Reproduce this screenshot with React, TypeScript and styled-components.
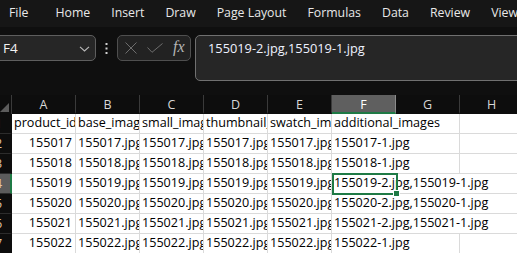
import styled, { createGlobalStyle } from 'styled-components';

const GlobalStyle = createGlobalStyle`
  html, body {
    margin: 0;
    padding: 0;
    background: #0f0f0f;
    overflow: hidden;
  }
  body {
    width: 517px;
    height: 253px;
    font-family: "Open Sans", "Liberation Sans", sans-serif;
  }
`;

const tabs = ['File', 'Home', 'Insert', 'Draw', 'Page Layout', 'Formulas', 'Data', 'Review', 'View'];
const columns = ['A', 'B', 'C', 'D', 'E', 'F', 'G', 'H'];

// a cell is its text and how many columns its text runs over
type CellData = { text: string; span?: number };

const imgs = (id: string, extra: CellData[]): CellData[] => [
  { text: id },
  { text: `${id}.jpg` },
  { text: `${id}.jpg` },
  { text: `${id}.jpg` },
  { text: `${id}.jpg` },
  ...extra,
];

const rows: CellData[][] = [
  [
    { text: 'product_id' },
    { text: 'base_image' },
    { text: 'small_image' },
    { text: 'thumbnail_image' },
    { text: 'swatch_image' },
    { text: 'additional_images', span: 2 },
    { text: '' },
  ],
  imgs('155017', [{ text: '155017-1.jpg', span: 2 }, { text: '' }]),
  imgs('155018', [{ text: '155018-1.jpg', span: 2 }, { text: '' }]),
  imgs('155019', [{ text: '155019-2.jpg,155019-1.jpg', span: 3 }]),
  imgs('155020', [{ text: '155020-2.jpg,155020-1.jpg', span: 3 }]),
  imgs('155021', [{ text: '155021-2.jpg,155021-1.jpg', span: 3 }]),
  imgs('155022', [{ text: '155022-1.jpg', span: 2 }, { text: '' }]),
  Array.from({ length: 8 }, () => ({ text: '' })),
];

const App = () => {
  return (
    <Page>
      <GlobalStyle />
      <MenuBar>
        {tabs.map((t) => (
          <Tab key={t}>{t}</Tab>
        ))}
      </MenuBar>

      <FormulaArea>
        <NameBox>
          <span>F4</span>
          <svg width="11" height="6" viewBox="0 0 11 6">
            <path d="M1 0.8 L5.5 5 L10 0.8" fill="none" stroke="#b8b8b8" strokeWidth="1.1" />
          </svg>
        </NameBox>
        <Dots>
          <svg width="3" height="11" viewBox="0 0 3 11">
            <rect x="0.5" y="0" width="2" height="2" fill="#d0d0d0" />
            <rect x="0.5" y="4.5" width="2" height="2" fill="#d0d0d0" />
            <rect x="0.5" y="9" width="2" height="2" fill="#d0d0d0" />
          </svg>
        </Dots>
        <FxGroup>
          <svg width="12" height="12" viewBox="0 0 12 12">
            <path d="M0.5 0.5 L11.5 11.5 M11.5 0.5 L0.5 11.5" stroke="#6e6e6e" strokeWidth="1" />
          </svg>
          <svg width="16" height="10" viewBox="0 0 16 10">
            <path d="M0.5 4.5 L5 9.3 L15.5 0.5" fill="none" stroke="#6e6e6e" strokeWidth="1" />
          </svg>
          <FxLabel>fx</FxLabel>
        </FxGroup>
        <FormulaInput>155019-2.jpg,155019-1.jpg</FormulaInput>
      </FormulaArea>

      <Sheet>
        <Corner>
          <svg width="9" height="9" viewBox="0 0 9 9">
            <path d="M9 0 L9 9 L0 9 Z" fill="#5c5c5c" />
          </svg>
        </Corner>
        {columns.map((c) => (
          <ColHeader key={c} $active={c === 'F'}>{c}</ColHeader>
        ))}

        {rows.map((row, ri) => (
          <RowFragment key={ri} cells={row} index={ri} />
        ))}

        <Selection>
          <FillHandle />
        </Selection>
      </Sheet>
    </Page>
  );
};

const RowFragment = ({ cells, index }: { cells: CellData[]; index: number }) => (
  <>
    <RowHeader $active={index === 3}>{index + 1}</RowHeader>
    {cells.map((c, ci) => (
      <Cell key={ci} $num={ci === 0 && /^\d+$/.test(c.text)} $span={c.span ?? 1}>
        {c.text}
      </Cell>
    ))}
  </>
);

const Page = styled.div`
  width: 517px;
  height: 253px;
  overflow: hidden;
  background: #0f0f0f;
`;

const MenuBar = styled.div`
  display: flex;
  align-items: center;
  gap: 21px;
  height: 27px;
  padding: 0 0 2px 9px;
  box-sizing: border-box;
  background: #161616;
  white-space: nowrap;

  & > div:first-child {
    margin-right: 6px;
  }
`;

const Tab = styled.div`
  font-family: "Open Sans", sans-serif;
  font-size: 12.3px;
  color: #e8e8e8;
`;

const FormulaArea = styled.div`
  display: flex;
  align-items: flex-start;
  height: 61px;
  padding-top: 8px;
  box-sizing: border-box;
  background: #0f0f0f;
`;

const NameBox = styled.div`
  display: flex;
  align-items: center;
  justify-content: space-between;
  box-sizing: border-box;
  width: 106px;
  height: 26px;
  margin-left: -10px;
  padding: 0 5px 0 12px;
  background: #262626;
  border: 1px solid #5e5e5e;
  border-radius: 5px;
  color: #f2f2f2;
  font-size: 13.5px;
  font-family: "Open Sans", sans-serif;

  svg {
    margin-top: 1px;
  }
`;

const Dots = styled.div`
  display: flex;
  align-items: center;
  justify-content: center;
  width: 21px;
  height: 26px;
`;

const FxGroup = styled.div`
  display: flex;
  align-items: center;
  gap: 10px;
  box-sizing: border-box;
  width: 74px;
  height: 26px;
  padding: 0 0 0 7px;
  background: #222222;
  border: 1px solid #4f4f4f;
  border-radius: 5px;
`;

const FxLabel = styled.span`
  font-family: "Liberation Serif", "DejaVu Serif", serif;
  font-style: italic;
  font-size: 16px;
  color: #b5b5b5;
  margin-top: -2px;
`;

const FormulaInput = styled.div`
  flex: 1;
  box-sizing: border-box;
  height: 46px;
  margin-left: 4px;
  margin-right: -20px;
  padding: 3px 0 0 12px;
  background: #262626;
  border: 1px solid #707070;
  border-radius: 5px 0 0 5px;
  color: #eef2ff;
  font-family: "Open Sans", sans-serif;
  font-size: 12.8px;
  white-space: nowrap;
`;

const Sheet = styled.div`
  position: relative;
  display: grid;
  grid-template-columns: 25px repeat(8, 64px);
  grid-template-rows: 19px;
  grid-auto-rows: 20px;
  margin-left: -13px;
  margin-top: 7px;
`;

const Corner = styled.div`
  display: flex;
  align-items: flex-end;
  justify-content: flex-end;
  padding: 0 2px 2px 0;
  box-sizing: border-box;
  background: #0d0d0d;
  border-right: 1px solid #3a3a3a;
`;

const ColHeader = styled.div<{ $active?: boolean }>`
  display: flex;
  align-items: center;
  justify-content: center;
  box-sizing: border-box;
  background: ${(p) => (p.$active ? '#5f5f5f' : '#0d0d0d')};
  border-right: 1px solid ${(p) => (p.$active ? '#8a8a8a' : '#3a3a3a')};
  border-bottom: 2px solid ${(p) => (p.$active ? '#1f7a45' : '#0d0d0d')};
  color: ${(p) => (p.$active ? '#ffffff' : '#d8d8d8')};
  font-family: "Open Sans", sans-serif;
  font-size: 12.5px;
  padding-top: 1px;
`;

const RowHeader = styled.div<{ $active?: boolean }>`
  display: flex;
  align-items: center;
  justify-content: center;
  box-sizing: border-box;
  background: ${(p) => (p.$active ? '#5c5c5c' : '#0d0d0d')};
  border-bottom: 1px solid #2c2c2c;
  border-right: 2px solid ${(p) => (p.$active ? '#1f7a45' : '#0d0d0d')};
  color: #e3c4a4;
  font-family: "Open Sans", sans-serif;
  font-size: 12.5px;
`;

const Cell = styled.div<{ $num?: boolean; $span: number }>`
  grid-column: span ${(p) => p.$span};
  box-sizing: border-box;
  padding: 0 3px 2px 2px;
  background: #ffffff;
  border-right: 1px solid #dadada;
  border-bottom: 1px solid #dadada;
  color: #000000;
  font-family: "Open Sans", sans-serif;
  font-size: 12.6px;
  line-height: 18px;
  text-align: ${(p) => (p.$num ? 'right' : 'left')};
  white-space: nowrap;
  overflow: hidden;
`;

const Selection = styled.div`
  position: absolute;
  left: 345px;
  top: 78px;
  width: 66px;
  height: 22px;
  box-sizing: border-box;
  border: 2px solid #1f7a45;
  pointer-events: none;
`;

const FillHandle = styled.div`
  position: absolute;
  right: -4px;
  bottom: -4px;
  width: 5px;
  height: 5px;
  background: #1f7a45;
  border: 1px solid #ffffff;
`;

export default App;
